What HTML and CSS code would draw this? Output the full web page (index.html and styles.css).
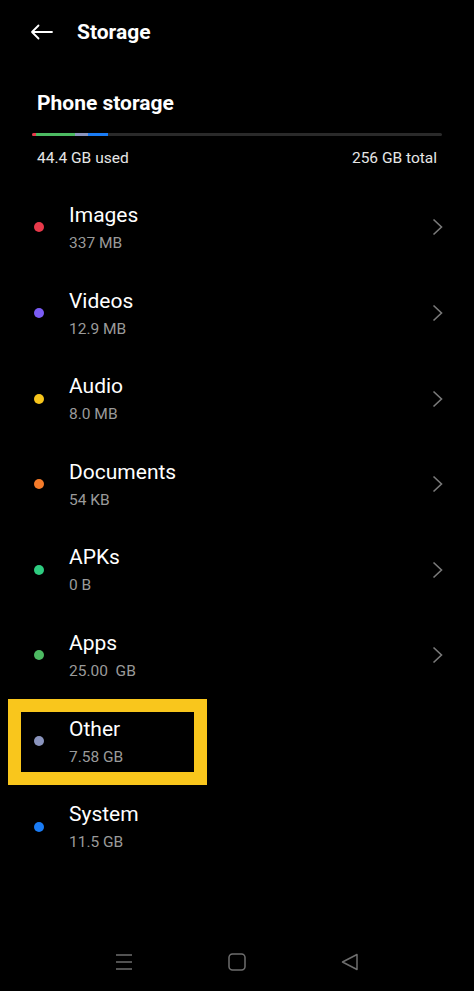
FILE: index.html
```html
<!DOCTYPE html>
<html lang="en">
<head>
    <meta charset="UTF-8">
    <meta name="viewport" content="width=device-width, initial-scale=1.0">
    <title>Storage</title>
    <link rel="stylesheet" href="styles.css">
</head>
<body>
    <div class="screen">
        <div class="header">
            <svg class="back" width="23" height="16" viewBox="0 0 23 16">
                <path d="M22 8H2M8.5 1.5L2 8l6.5 6.5" fill="none" stroke="#fff" stroke-width="1.8" stroke-linecap="round" stroke-linejoin="round"/>
            </svg>
            <span class="header-title">Storage</span>
        </div>

        <div class="section">
            <h2 class="section-title">Phone storage</h2>
            <div class="bar">
                <span class="seg" style="width:4px;background:#e8394a"></span>
                <span class="seg" style="width:39px;background:#4cba62"></span>
                <span class="seg" style="width:13px;background:#8a94bd"></span>
                <span class="seg" style="width:20px;background:#1a7cf5"></span>
            </div>
            <div class="usage">
                <span>44.4 GB used</span>
                <span>256 GB total</span>
            </div>
        </div>

        <ul class="list">
            <li class="row">
                <span class="dot" style="background:#e8394a"></span>
                <div class="text"><div class="name">Images</div><div class="size">337 MB</div></div>
                <svg class="chevron" width="11" height="18" viewBox="0 0 11 18"><path d="M1.5 1.5L9.5 9l-8 7.5" fill="none" stroke="#7a7a7a" stroke-width="1.6"/></svg>
            </li>
            <li class="row">
                <span class="dot" style="background:#7b5cf5"></span>
                <div class="text"><div class="name">Videos</div><div class="size">12.9 MB</div></div>
                <svg class="chevron" width="11" height="18" viewBox="0 0 11 18"><path d="M1.5 1.5L9.5 9l-8 7.5" fill="none" stroke="#7a7a7a" stroke-width="1.6"/></svg>
            </li>
            <li class="row">
                <span class="dot" style="background:#f7c51c"></span>
                <div class="text"><div class="name">Audio</div><div class="size">8.0 MB</div></div>
                <svg class="chevron" width="11" height="18" viewBox="0 0 11 18"><path d="M1.5 1.5L9.5 9l-8 7.5" fill="none" stroke="#7a7a7a" stroke-width="1.6"/></svg>
            </li>
            <li class="row">
                <span class="dot" style="background:#f57b2a"></span>
                <div class="text"><div class="name">Documents</div><div class="size">54 KB</div></div>
                <svg class="chevron" width="11" height="18" viewBox="0 0 11 18"><path d="M1.5 1.5L9.5 9l-8 7.5" fill="none" stroke="#7a7a7a" stroke-width="1.6"/></svg>
            </li>
            <li class="row">
                <span class="dot" style="background:#2ecc80"></span>
                <div class="text"><div class="name">APKs</div><div class="size">0 B</div></div>
                <svg class="chevron" width="11" height="18" viewBox="0 0 11 18"><path d="M1.5 1.5L9.5 9l-8 7.5" fill="none" stroke="#7a7a7a" stroke-width="1.6"/></svg>
            </li>
            <li class="row">
                <span class="dot" style="background:#4cba62"></span>
                <div class="text"><div class="name">Apps</div><div class="size">25.00&nbsp; GB</div></div>
                <svg class="chevron" width="11" height="18" viewBox="0 0 11 18"><path d="M1.5 1.5L9.5 9l-8 7.5" fill="none" stroke="#7a7a7a" stroke-width="1.6"/></svg>
            </li>
            <li class="row highlight">
                <span class="dot" style="background:#8a94bd"></span>
                <div class="text"><div class="name">Other</div><div class="size">7.58 GB</div></div>
            </li>
            <li class="row">
                <span class="dot" style="background:#1a7cf5"></span>
                <div class="text"><div class="name">System</div><div class="size">11.5 GB</div></div>
            </li>
        </ul>

        <div class="navbar">
            <svg width="18" height="18" viewBox="0 0 18 18">
                <path d="M1 2h16M1 9h16M1 16h16" stroke="#6e6e6e" stroke-width="1.5"/>
            </svg>
            <svg width="18" height="18" viewBox="0 0 18 18">
                <rect x="1" y="1" width="16" height="16" rx="3.5" fill="none" stroke="#6e6e6e" stroke-width="1.5"/>
            </svg>
            <svg width="18" height="18" viewBox="0 0 18 18">
                <path d="M16 1.5v15L1.5 9z" fill="none" stroke="#6e6e6e" stroke-width="1.5" stroke-linejoin="round"/>
            </svg>
        </div>
    </div>
</body>
</html>
```

FILE: styles.css
```css
body {
    margin: 0;
    background: #000;
    color: #fff;
    font-family: Roboto, "Noto Sans", sans-serif;
}

.screen {
    display: flex;
    flex-direction: column;
    min-height: 991px;
}

.header {
    display: flex;
    align-items: center;
    height: 63px;
    padding-left: 30px;
}

.back {
    margin-right: 24px;
}

.header-title {
    font-size: 21px;
    font-weight: bold;
}

.section {
    padding: 27px 37px 0 32px;
}

.section-title {
    margin: 0 0 17px 5px;
    font-size: 21px;
    line-height: 26px;
    font-weight: bold;
}

.bar {
    display: flex;
    height: 3px;
    background: #2a2a2a;
    border-radius: 2px;
    overflow: hidden;
    margin-right: -5px;
}

.seg {
    height: 100%;
}

.usage {
    display: flex;
    justify-content: space-between;
    margin: 12px 0 0 5px;
    font-size: 15.5px;
    line-height: 20px;
    color: #e6e6e6;
}

.list {
    list-style: none;
    margin: 16.7px 0 0;
    padding: 0;
}

.row {
    position: relative;
    display: flex;
    align-items: center;
    height: 85.6px;
    padding: 0 31px 0 34px;
    box-sizing: border-box;
}

.dot {
    width: 10px;
    height: 10px;
    border-radius: 50%;
    margin-right: 25px;
    flex-shrink: 0;
}

.text {
    flex: 1;
}

.name {
    font-size: 21px;
    line-height: 26px;
    color: #fff;
}

.size {
    margin-top: 5px;
    font-size: 15.5px;
    line-height: 20px;
    color: #9a9a9a;
}

.chevron {
    flex-shrink: 0;
}

.highlight::after {
    content: "";
    position: absolute;
    left: 8px;
    top: 1px;
    width: 199px;
    height: 86px;
    border: 13px solid #f9c61c;
    box-sizing: border-box;
}

.navbar {
    margin-top: auto;
    height: 58px;
    display: flex;
    align-items: center;
    justify-content: center;
    gap: 95px;
}
```
